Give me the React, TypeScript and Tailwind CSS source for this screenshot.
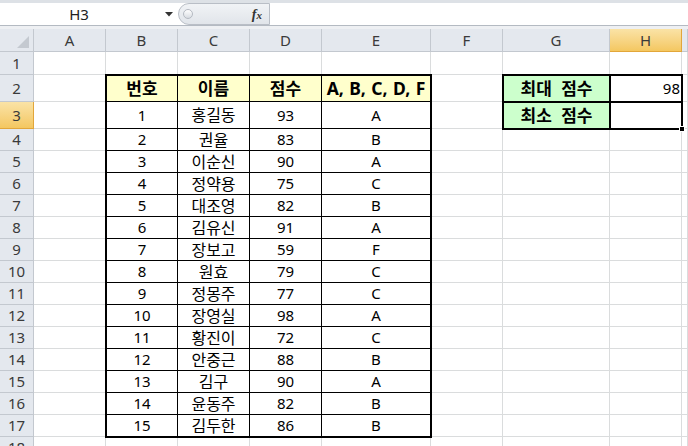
import React from "react";

const data: [number, string, number, string][] = [
  [1, "홍길동", 93, "A"],
  [2, "권율", 83, "B"],
  [3, "이순신", 90, "A"],
  [4, "정약용", 75, "C"],
  [5, "대조영", 82, "B"],
  [6, "김유신", 91, "A"],
  [7, "장보고", 59, "F"],
  [8, "원효", 79, "C"],
  [9, "정몽주", 77, "C"],
  [10, "장영실", 98, "A"],
  [11, "황진이", 72, "C"],
  [12, "안중근", 88, "B"],
  [13, "김구", 90, "A"],
  [14, "윤동주", 82, "B"],
  [15, "김두한", 86, "B"],
];

const font = { fontFamily: '"Noto Sans", "Noto Sans CJK KR", sans-serif' };

function HeaderCell({ label, active }: { label: string; active?: boolean }) {
  return (
    <div
      className={
        active
          ? "flex items-center justify-center border-r border-b border-[#e2a63a] bg-linear-to-b from-[#fae3a6] to-[#f4c760] text-[15px] text-[#3a3a3a]"
          : "flex items-center justify-center border-r border-b border-[#c3c8cf] bg-[#e4e8ee] text-[15px] text-[#3a3a3a]"
      }
    >
      {label}
    </div>
  );
}

function Blank() {
  return <div className="border-r border-b border-[#dadcdd] bg-white" />;
}

export default function App() {
  const letters = ["A", "B", "C", "D", "E", "F", "G", "H", ""];
  const rows = Array.from({ length: 18 }, (_, i) => i + 1);

  const cells: React.ReactNode[] = [];
  cells.push(
    <div key="corner" className="relative border-r border-b border-[#c3c8cf] bg-[#e4e8ee]">
      <svg className="absolute right-[4px] bottom-[3px]" width="12" height="12" viewBox="0 0 12 12">
        <polygon points="12,0 12,12 0,12" fill="#c4c9d0" />
      </svg>
    </div>
  );
  letters.forEach((l) => cells.push(<HeaderCell key={"h" + l} label={l} active={l === "H"} />));

  rows.forEach((r) => {
    cells.push(<HeaderCell key={"r" + r} label={String(r)} active={r === 3} />);
    for (let c = 0; c < 9; c++) {
      const inTable = c >= 1 && c <= 4 && r >= 2 && r <= 17;
      const inBox = c >= 6 && c <= 7 && r >= 2 && r <= 3;
      if (inTable || inBox) continue;
      cells.push(<Blank key={`c${r}-${c}`} />);
    }
  });

  const tableCells: React.ReactNode[] = [];
  const head = ["번호", "이름", "점수", "A, B, C, D, F"];
  head.forEach((h, i) => {
    tableCells.push(
      <div
        key={"th" + i}
        className={
          i < 3
            ? "flex items-center justify-center border-r border-b border-black bg-[#ffffcc] text-[17px] font-bold text-black"
            : "flex items-center justify-center border-b border-black bg-[#ffffcc] text-[17.5px] font-bold text-black [word-spacing:1px]"
        }
      >
        {h}
      </div>
    );
  });
  data.forEach((row, ri) => {
    const last = ri === data.length - 1;
    row.forEach((v, ci) => {
      let cls = "flex items-center justify-center bg-white text-black border-black";
      cls += ci === 1 ? " text-[16px]" : " text-[15px]";
      if (ci < 3) cls += " border-r";
      if (!last) cls += " border-b";
      tableCells.push(
        <div key={`t${ri}-${ci}`} className={cls}>
          {v}
        </div>
      );
    });
  });

  return (
    <div className="w-[688px] h-[446px] overflow-hidden bg-white select-none" style={font}>
      {/* formula bar */}
      <div className="h-[3px] bg-[#dde1e6]" />
      <div className="flex h-[23px] bg-white border-b border-[#b4bac2]">
        <div className="relative flex w-[178px] items-center justify-center bg-white text-[15px] text-[#222]">
          <span className="-ml-[20px]">H3</span>
          <svg className="absolute left-[165px] top-[9px]" width="8" height="5" viewBox="0 0 8 5">
            <polygon points="0,0 8,0 4,4.5" fill="#333" />
          </svg>
        </div>
        <div className="relative flex w-[92px] items-center rounded-l-full border-y border-l border-r border-[#b9bec6] bg-linear-to-b from-[#f1f3f6] to-[#e1e5ea]">
          <div className="ml-[4px] h-[10px] w-[10px] rounded-full border border-[#b5bac2] bg-linear-to-b from-[#ffffff] to-[#d8dce2]" />
          <span
            className="ml-auto mr-[7px] text-[14px] font-bold italic text-[#333]"
            style={{ fontFamily: '"Liberation Serif", serif' }}
          >
            f<span className="text-[11px]">x</span>
          </span>
        </div>
        <div className="flex-1 bg-white" />
      </div>
      <div className="h-[3px] bg-[#eef0f3]" />

      {/* grid */}
      <div className="grid grid-cols-[34px_72px_72px_72px_72px_109px_72px_107px_72px_1fr] grid-rows-[23px_23px_27px_27px_repeat(14,22px)_22px]">
        {cells}
        {/* main table B2:E17 */}
        <div className="z-10 col-start-3 col-span-4 row-start-3 row-span-16 -ml-px -mt-px -mr-px -mb-px border-2 border-black grid grid-cols-[71px_72px_72px_108px] grid-rows-[26px_27px_repeat(13,22px)_21px]">
          {tableCells}
        </div>
        {/* G2:H3 box */}
        <div className="z-10 col-start-8 col-span-2 row-start-3 row-span-2 -ml-px -mt-px -mr-px -mb-px border-2 border-black grid grid-cols-[107px_70px] grid-rows-[27px_25px]">
          <div className="flex items-center justify-center border-r-2 border-b-2 border-black bg-[#ccffcc] text-[17px] font-bold text-black [word-spacing:5px]">
            최대 점수
          </div>
          <div className="flex items-center justify-end border-b-2 border-black bg-white pr-[1px] text-[15px] text-black">
            98
          </div>
          <div className="flex items-center justify-center border-r-2 border-black bg-[#ccffcc] text-[17px] font-bold text-black [word-spacing:5px]">
            최소 점수
          </div>
          <div className="relative bg-white">
            <div className="absolute -right-[4px] -bottom-[4px] h-[6px] w-[6px] border border-white bg-black" />
          </div>
        </div>
      </div>
    </div>
  );
}
